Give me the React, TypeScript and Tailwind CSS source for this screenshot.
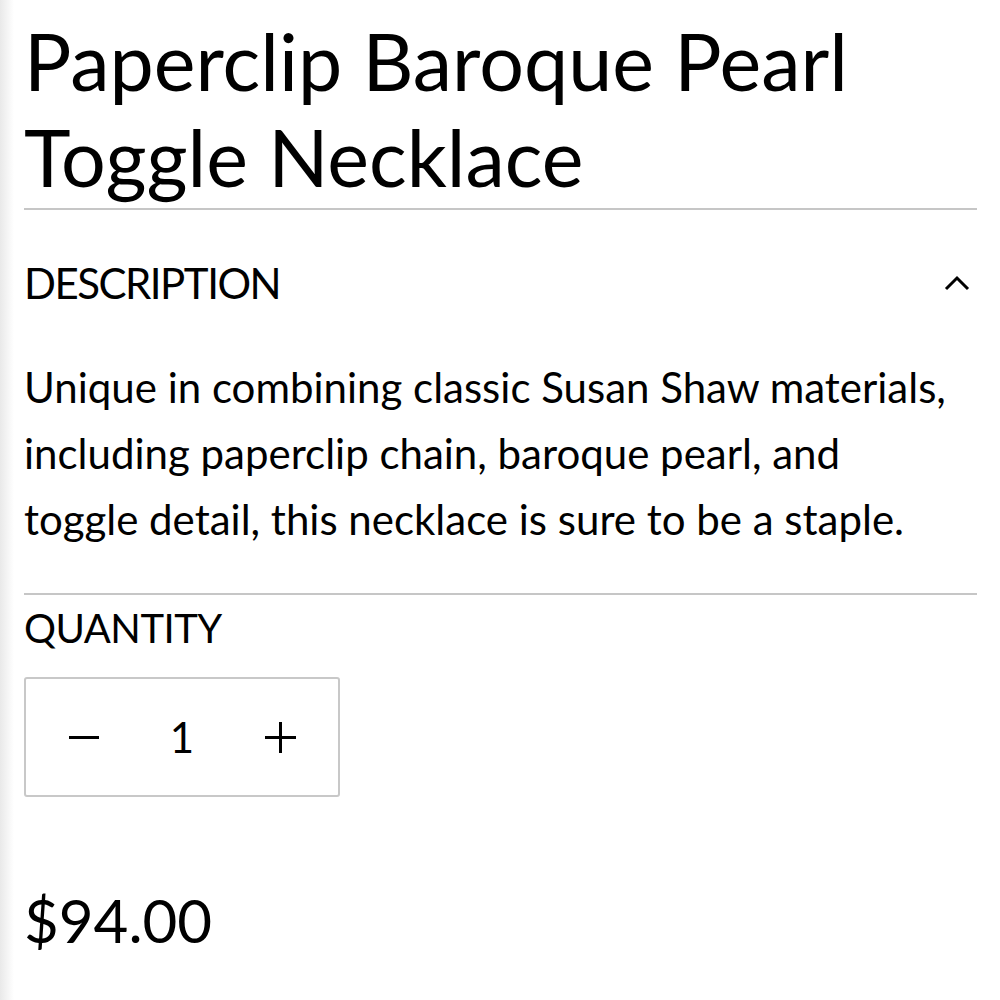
import { useState } from "react";

const font = { fontFamily: "Lato, 'Open Sans', sans-serif" };

export default function App() {
  const [qty, setQty] = useState<number>(1);
  const [open, setOpen] = useState<boolean>(true);

  return (
    <div
      className="min-h-[1000px] w-full bg-[linear-gradient(to_right,#e9e9e9,#ffffff_14px)] text-black"
      style={font}
    >
      <div className="pl-6 pr-[23px] pt-[13px]">
        <h1 className="text-[79px] leading-[96px] font-normal pb-[3px] border-b-2 border-[#c6c6c6]">
          Paperclip Baroque Pearl Toggle Necklace
        </h1>

        <div className="border-b-2 border-[#c6c6c6]">
          <button
            onClick={() => setOpen(!open)}
            className="w-full flex items-center justify-between pt-[52px] pb-[50px]"
          >
            <span className="text-[42px] leading-[42px] tracking-[-1.5px]">DESCRIPTION</span>
            <svg width="26" height="16" viewBox="0 0 26 16" className="mr-[7px]" fill="none">
              <path d="M2 14 L13 3 L24 14" stroke="black" strokeWidth="3" />
            </svg>
          </button>
          {open && (
            <p className="text-[42px] leading-[66px] pb-[41px]">
              Unique in combining classic Susan Shaw materials,
              <br />
              including paperclip chain, baroque pearl, and
              <br />
              toggle detail, this necklace is sure to be a staple.
            </p>
          )}
        </div>

        <div className="pt-[10px]">
          <div className="text-[40px] leading-[46px] tracking-[-0.5px]">QUANTITY</div>
          <div className="mt-[26px] w-[316px] h-[120px] border-2 border-[#c8c8c8] rounded-[3px] flex items-center">
            <button
              onClick={() => setQty(Math.max(1, qty - 1))}
              className="w-[116px] h-full flex items-center justify-center"
            >
              <svg width="30" height="3" viewBox="0 0 30 3">
                <rect x="0" y="0" width="30" height="3" fill="black" />
              </svg>
            </button>
            <span className="w-[80px] text-center text-[42px] leading-none">{qty}</span>
            <button
              onClick={() => setQty(qty + 1)}
              className="w-[116px] h-full flex items-center justify-center"
            >
              <svg width="31" height="31" viewBox="0 0 31 31">
                <rect x="0" y="14" width="31" height="3" fill="black" />
                <rect x="14" y="0" width="3" height="31" fill="black" />
              </svg>
            </button>
          </div>
        </div>

        <div className="mt-[91px] text-[60px] leading-[64px]">$94.00</div>
      </div>
    </div>
  );
}
